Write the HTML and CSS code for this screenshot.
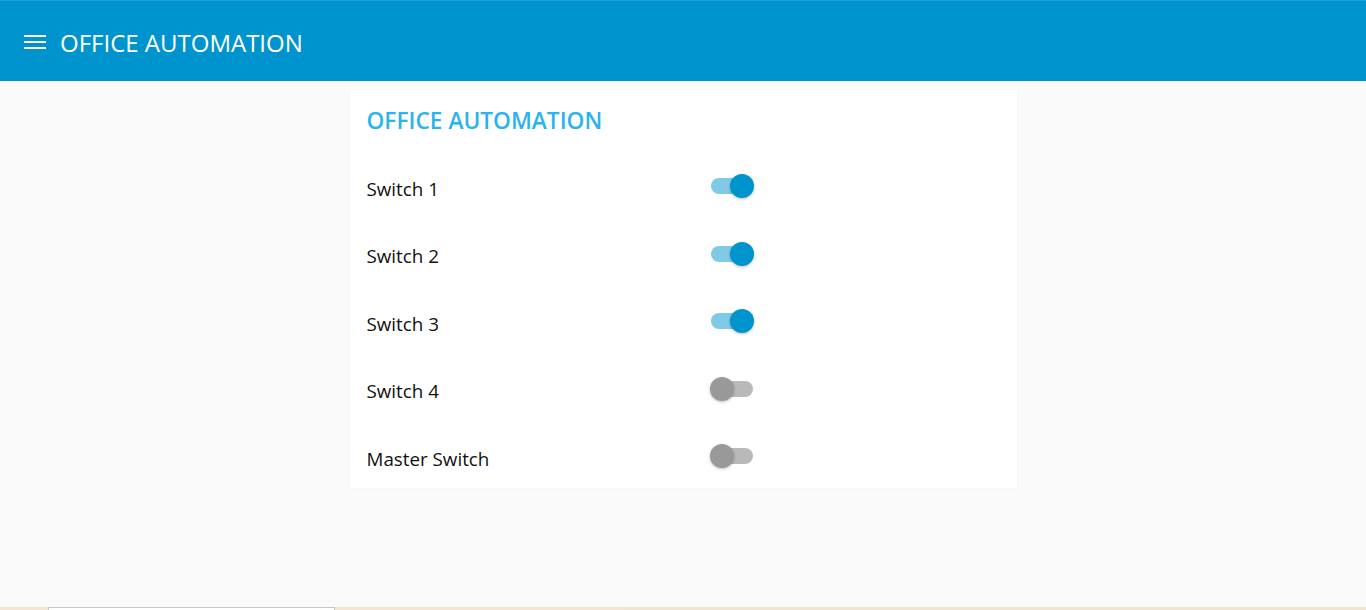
FILE: index.html
```html
<!DOCTYPE html>
<html>
<head>
<meta charset="utf-8">
<link rel="stylesheet" href="styles.css">
</head>
<body>
<div class="page">
  <header class="topbar">
    <svg class="menu" width="22" height="16" viewBox="0 0 22 16"><path d="M0 2h22M0 8h22M0 14h22" stroke="#fff" stroke-width="2.2" fill="none"/></svg>
    <span class="app-title">OFFICE AUTOMATION</span>
  </header>
  <main class="content">
    <section class="card">
      <h2 class="card-title">OFFICE AUTOMATION</h2>
      <div class="row"><span class="label">Switch 1</span><span class="toggle on"><span class="track"></span><span class="thumb"></span></span></div>
      <div class="row"><span class="label">Switch 2</span><span class="toggle on"><span class="track"></span><span class="thumb"></span></span></div>
      <div class="row"><span class="label">Switch 3</span><span class="toggle on"><span class="track"></span><span class="thumb"></span></span></div>
      <div class="row"><span class="label">Switch 4</span><span class="toggle"><span class="track"></span><span class="thumb"></span></span></div>
      <div class="row"><span class="label">Master Switch</span><span class="toggle"><span class="track"></span><span class="thumb"></span></span></div>
    </section>
  </main>
  <div class="strip"><span class="s1"></span><span class="s2"></span><span class="s3"></span><span class="s4"></span></div>
</div>
</body>
</html>
```
FILE: styles.css
```css
* { box-sizing: border-box; }
html, body { margin: 0; padding: 0; }
body {
  background: #fafafa;
  font-family: "Open Sans", "Noto Sans", sans-serif;
  color: #111;
}
.page {
  height: 610px;
  display: flex;
  flex-direction: column;
}
.topbar {
  height: 81px;
  flex: none;
  background: #0094ce;
  border-top: 1px solid #1aa0d6;
  display: flex;
  align-items: center;
  padding-left: 24px;
  padding-top: 2px;
  color: #fff;
}
.menu { display: block; margin-right: 14px; }
.app-title {
  font-size: 24px;
  letter-spacing: 0;
}
.content {
  flex: 1;
  display: flex;
  justify-content: center;
  align-items: flex-start;
  padding-top: 9px;
}
.card {
  width: 667px;
  background: #fff;
  padding: 11px 17px 0 17px;
  height: 398px;
  box-shadow: 0 0 2px rgba(0,0,0,0.04);
}
.card-title {
  margin: 0;
  color: #2bb4ec;
  font-size: 22.7px;
  font-weight: 600;
  line-height: 40px;
  margin-bottom: 14px;
  letter-spacing: 0;
}
.row {
  display: flex;
  align-items: center;
  height: 67.5px;
}
.label {
  width: 344px;
  font-size: 18.8px;
}
.toggle {
  position: relative;
  width: 46px;
  height: 26px;
  display: inline-block;
  margin-top: -5px;
}
.track {
  position: absolute;
  left: 0;
  top: 5px;
  width: 42px;
  height: 16px;
  border-radius: 8px;
  background: #b9b9b9;
}
.thumb {
  position: absolute;
  left: -1px;
  top: 1px;
  width: 24px;
  height: 24px;
  border-radius: 50%;
  background: #999;
  box-shadow: 0 1px 3px rgba(0,0,0,0.25);
}
.toggle.on .track { background: #80c9e7; }
.toggle.on .thumb { left: 19px; background: #0094ce; }
.strip {
  height: 3px;
  flex: none;
  display: flex;
}
.strip span { display: block; height: 100%; }
.s1 { width: 48px; background: #f1e7d1; }
.s2 { width: 287px; background: #fff; border-top: 1px solid #c8c8c8; border-left: 1px solid #c8c8c8; border-right: 1px solid #c8c8c8; }
.s3 { width: 296px; background: #f1e7d1; }
.s4 { flex: 1; background: #efe6cf; }
```
